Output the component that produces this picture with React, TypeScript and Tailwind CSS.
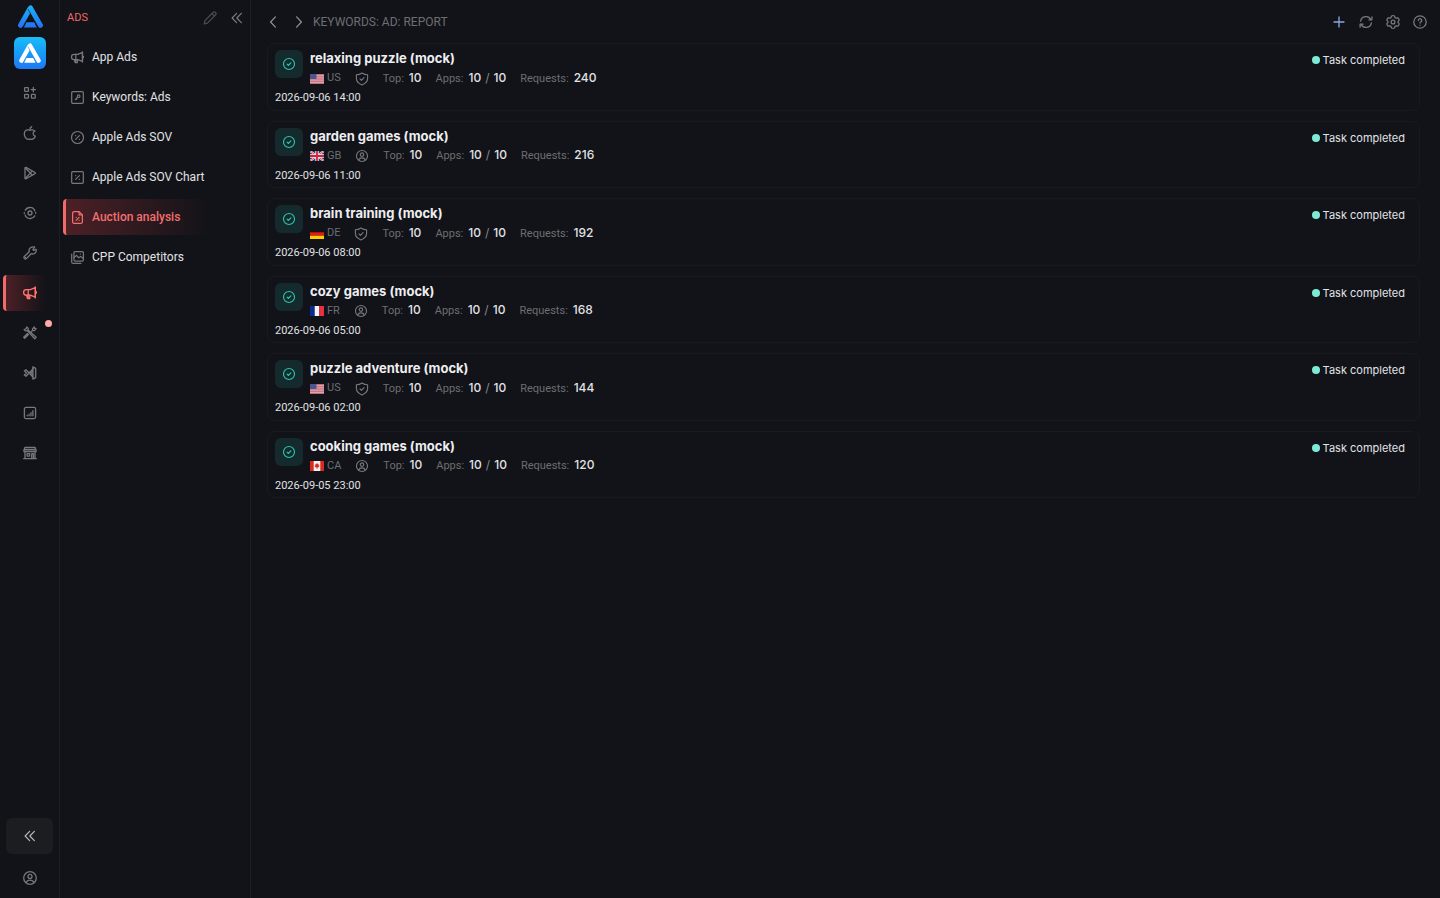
import type { ReactNode } from "react";

type IconProps = { className?: string; children?: ReactNode };

function Icon({ className = "size-4", children }: IconProps) {
  return (
    <svg
      viewBox="0 0 16 16"
      className={`shrink-0 ${className}`}
      fill="none"
      stroke="currentColor"
      strokeWidth="1.3"
      strokeLinecap="round"
      strokeLinejoin="round"
      aria-hidden="true"
    >
      {children}
    </svg>
  );
}

const icons = {
  apps: (
    <>
      <rect x="2.6" y="2.6" width="3.8" height="3.8" rx="0.6" />
      <rect x="2.6" y="9.4" width="3.8" height="3.8" rx="0.6" />
      <rect x="9.4" y="9.4" width="3.8" height="3.8" rx="0.6" />
      <path d="M11.3 2.4v4.4M9.1 4.6h4.4" />
    </>
  ),
  apple: (
    <>
      <path d="M13 6.200C12 5 10.600 4.600 9.400 4.900c-.9.300-1.900.300-2.800 0C4.200 4.300 2.300 6.200 2.300 8.700c0 2.900 1.900 5.700 4 5.700.6 0 1.100-.3 1.700-.3s1.100.3 1.700.3c1.700 0 3-1.700 3.600-3.400-1.400-.4-2.200-1.300-2.200-2.500s.7-2 1.900-2.300Z" />
      <path d="M8 4.600c0-1.500.6-2.500 1.700-3" />
    </>
  ),
  play: (
    <>
      <path d="M3 3v10.200c0 .5.500.8 1 .5l9-5.100c.5-.3.500-.8 0-1.100L4 2.400c-.5-.2-1 .1-1 .6Z" />
      <path d="m3.400 3 6.600 6.800M3.400 13.200 10 6.400" />
    </>
  ),
  target: (
    <>
      <circle cx="8" cy="8" r="2" />
      <path d="M3.200 5.200a5.600 5.600 0 0 1 9.200-.6l.3 1.300M12.800 10.800a5.600 5.600 0 0 1-9.200.6l-.3-1.300M2.300 7.700v.8M13.700 7.500v.8" />
    </>
  ),
  wrench: (
    <>
      <path d="M14 4.400c.6 1.900-.4 3.600-1.900 4.300-1 .4-2.100.3-2.900 0l-4.800 4.900a1.500 1.500 0 0 1-2.100-2.100l4.900-4.800c-.5-1.500 0-3 1.300-4 1.200-.9 2.800-1.100 4-.5" />
      <path d="M14 4.400 11.700 5.400 10.900 4.500l1.600-2.300M3.400 12.500h.1" />
    </>
  ),
  megaphone: (
    <>
      <path d="M8.300 4.600H4.400a2.800 2.800 0 0 0 0 5.600h3.900l5 2V2.600l-5 2Z" />
      <path d="M6.200 4.600v8.900h1.600v-3.300M4.600 10.300l.9 3.200h.7M13.300 1.900v11M14.300 6.700v1.500" />
    </>
  ),
  tools: (
    <>
      <path d="m9.400 6.600 1.200-1.200-.1-1.600L12.400 2l.3 1.400 1.400.3-1.800 1.900-1.700-.1M6.500 9.500l-3.800 3.800-1-1 3.800-3.800" />
      <path d="M2.100 4.500a2.400 2.400 0 0 0 3.200 1.100l7.400 8.200 1.500-1.500L6 5a2.400 2.400 0 0 0-1.200-3L4 3.900 2.100 4.500Z" />
    </>
  ),
  code: (
    <>
      <path d="M10.900 1.900v12.200l2.800-1.500V3.400l-2.800-1.500Z" />
      <path d="M10.900 4 4 11.200 2.300 9.900 4.600 8 2.300 6.100 4 4.800l6.900 7.200M10.900 6.200 8.900 8l2 1.800" />
    </>
  ),
  chart: (
    <>
      <rect x="2.4" y="2.4" width="11.2" height="11.2" rx="1.5" />
      <path d="M5.200 10.800v-.6M7.100 10.800V9.200M9 10.800V7.600M10.900 10.800V5.600" />
    </>
  ),
  store: (
    <>
      <path d="M3 2.300h10l1.100 3v1.200H1.900V5.300L3 2.300ZM3 6.800v6.700M13 6.800v6.700M1.700 13.700h12.600M3 4.500h10" />
      <path d="M5.100 8.700h2.500v2.400H5.100zM9.700 13.400V8.700h1.700v4.700" />
    </>
  ),
  user: (
    <>
      <circle cx="8" cy="8" r="6.3" />
      <circle cx="8" cy="6.400" r="2" />
      <path d="M4.200 12.500c.6-1.500 2-2.300 3.800-2.300s3.200.8 3.800 2.300" />
    </>
  ),
  keyBox: (
    <>
      <rect x="1.800" y="1.800" width="12.400" height="12.400" rx="1.200" />
      <circle cx="9.200" cy="6.600" r="1.400" />
      <path d="m8.100 7.700-2.500 2.600M6.600 9.300l.7.700" />
    </>
  ),
  percentCircle: (
    <>
      <circle cx="8" cy="8" r="6.400" />
      <path d="m6 10 4-4M6 6.100h.1M10 10h.1" />
    </>
  ),
  percentBox: (
    <>
      <rect x="1.800" y="1.800" width="12.400" height="12.400" rx="1.200" />
      <path d="m6 10 4-4M6 6.100h.1M10 10h.1" />
    </>
  ),
  percentFile: (
    <>
      <path d="M9.700 1.800H4.200a1.400 1.400 0 0 0-1.400 1.400v9.600a1.400 1.400 0 0 0 1.400 1.400h7.600a1.400 1.400 0 0 0 1.400-1.400V5.300L9.700 1.800Z" />
      <path d="M9.700 2v3.300H13M6.500 11l3.200-3.200M6.500 8h.1M9.700 11h.1" />
    </>
  ),
  images: (
    <>
      <rect x="4.200" y="1.700" width="10.100" height="10.100" rx="1.200" />
      <path d="M1.800 4.500v8.200c0 .9.700 1.600 1.600 1.600h8.200M4.500 8l2.400-2.300 2.500 2.600 2-1.500 2.700 2.200M11 4.300h.1" />
    </>
  ),
  pencil: <path d="m2.200 13.800.7-3.200 8.300-8.300a1.400 1.400 0 0 1 2 0l.5.5a1.400 1.400 0 0 1 0 2L5.400 13.100l-3.200.7ZM10 3.600 12.500 6" />,
  chevronsLeft: <path d="M7.600 2.600 2.400 8l5.200 5.400M13 2.600 7.800 8l5.200 5.400" />,
  chevronLeft: <path d="M10.400 2.900 5.600 8l4.800 5.100" />,
  chevronRight: <path d="M5.600 2.900 10.400 8l-4.800 5.100" />,
  plus: <path d="M8 3v10M3 8h10" />,
  refresh: (
    <>
      <path d="M2.600 7.200A5.500 5.500 0 0 1 12.900 5.600M13.400 8.800A5.500 5.500 0 0 1 3.100 10.400" />
      <path d="M13.900 2.800v3h-3M2.100 13.200v-3h3" />
    </>
  ),
  gear: (
    <>
      <path d="m6.500 2 1.500-.5L9.500 2l.5 1.600 1.100.6 1.600-.4 1.100 1.100.3 1.500L13 7.600v.8l1.100 1.200-.3 1.500-1.100 1.100-1.600-.4-1.100.6L9.500 14l-1.500.5L6.500 14 6 12.400l-1.100-.6-1.600.4-1.100-1.100-.3-1.500L3 8.400v-.8L1.900 6.400l.3-1.500 1.100-1.100 1.600.4L6 3.600 6.500 2Z" />
      <circle cx="8" cy="8" r="1.900" />
    </>
  ),
  help: (
    <>
      <circle cx="8" cy="8" r="6.200" />
      <path d="M6.300 6.400a1.700 1.700 0 1 1 2.600 1.500c-.6.300-.9.600-.9 1.100M8 11.200v.1" />
    </>
  ),
  check: (
    <>
      <circle cx="8" cy="8" r="6.300" />
      <path d="m5.800 8.200 1.600 1.500 2.700-3.100" />
    </>
  ),
  shield: (
    <>
      <path d="M8 1.100c1.900 1.300 4.100 2 6.400 2.100v4.300c0 3.500-2.600 5.800-6.400 7.400-3.800-1.600-6.400-3.900-6.400-7.400V3.200C3.900 3.100 6.100 2.400 8 1.100Z" />
      <path d="m5.700 7.900 1.700 1.600 2.900-3.200" />
    </>
  ),
};

type IconName = keyof typeof icons;

const railItems: { label: string; icon: IconName; active?: boolean; dot?: boolean }[] = [
  { label: "My apps", icon: "apps" },
  { label: "App Store", icon: "apple" },
  { label: "Google Play", icon: "play" },
  { label: "Visibility", icon: "target" },
  { label: "Keywords", icon: "wrench" },
  { label: "Ads", icon: "megaphone", active: true },
  { label: "Tools", icon: "tools", dot: true },
  { label: "Developer", icon: "code" },
  { label: "Analytics", icon: "chart" },
  { label: "Store", icon: "store" },
];

const menuItems: { label: string; icon: IconName; active?: boolean }[] = [
  { label: "App Ads", icon: "megaphone" },
  { label: "Keywords: Ads", icon: "keyBox" },
  { label: "Apple Ads SOV", icon: "percentCircle" },
  { label: "Apple Ads SOV Chart", icon: "percentBox" },
  { label: "Auction analysis", icon: "percentFile", active: true },
  { label: "CPP Competitors", icon: "images" },
];

const tasks: { title: string; country: string; icon: IconName; requests: number; date: string }[] = [
  { title: "relaxing puzzle (mock)", country: "US", icon: "shield", requests: 240, date: "2026-09-06 14:00" },
  { title: "garden games (mock)", country: "GB", icon: "user", requests: 216, date: "2026-09-06 11:00" },
  { title: "brain training (mock)", country: "DE", icon: "shield", requests: 192, date: "2026-09-06 08:00" },
  { title: "cozy games (mock)", country: "FR", icon: "user", requests: 168, date: "2026-09-06 05:00" },
  { title: "puzzle adventure (mock)", country: "US", icon: "shield", requests: 144, date: "2026-09-06 02:00" },
  { title: "cooking games (mock)", country: "CA", icon: "user", requests: 120, date: "2026-09-05 23:00" },
];

// two legs and a foot, with thin seams where the parts meet
function LogoShape({ fill, seam }: { fill: string; seam: string }) {
  return (
    <>
      <path d="M2.600 20.300 11.300 4.600" stroke={fill} strokeWidth="5" strokeLinecap="round" />
      <path d="M12.500 2.900 22.400 20.300" stroke={seam} strokeWidth="6.200" />
      <path d="M12.500 2.900 22.400 20.300" stroke={fill} strokeWidth="5" strokeLinecap="round" />
      <path d="M8.200 17.200h8.200l2.600 5.400H5.600l2.600-5.400Z" fill={fill} />
      <path d="M8.300 16.500 5.200 22.800M16.400 16.500l3.200 6.300" stroke={seam} strokeWidth="0.900" />
    </>
  );
}

function Logo() {
  return (
    <svg viewBox="0 0 25 23" className="h-[23px] w-[25px]" fill="none" aria-hidden="true">
      <defs>
        <linearGradient id="logo" gradientUnits="userSpaceOnUse" x1="0" y1="0" x2="0" y2="23">
          <stop stopColor="#18b4f5" />
          <stop offset="1" stopColor="#2670f2" />
        </linearGradient>
      </defs>
      <LogoShape fill="url(#logo)" seam="#111318" />
    </svg>
  );
}

function Flag({ country }: { country: string }) {
  return (
    <svg viewBox="0 0 14 10" className="h-[10px] w-[14px]" role="img" aria-label={country}>
      {country === "US" && (
        <>
          <path fill="#d9b5ba" d="M0 0h14v10H0z" />
          <path stroke="#c4626e" strokeWidth="0.9" d="M0 .5h14M0 2.300h14M0 4.100h14M0 5.900h14M0 7.700h14M0 9.500h14" />
          <path fill="#4c5590" d="M0 0h6.500v5H0z" />
        </>
      )}
      {country === "GB" && (
        <>
          <path fill="#1c3578" d="M0 0h14v10H0z" />
          <path stroke="#eee" strokeWidth="2" d="m0 0 14 10M14 0 0 10" />
          <path stroke="#d22c3c" strokeWidth="0.8" d="m0 0 14 10M14 0 0 10" />
          <path stroke="#eee" strokeWidth="3.400" d="M7 0v10M0 5h14" />
          <path stroke="#d8203a" strokeWidth="1.800" d="M7 0v10M0 5h14" />
        </>
      )}
      {country === "DE" && (
        <>
          <path fill="#16120f" d="M0 0h14v3.300H0z" />
          <path fill="#e31b1b" d="M0 3.300h14v3.400H0z" />
          <path fill="#ffce00" d="M0 6.700h14V10H0z" />
        </>
      )}
      {country === "FR" && (
        <>
          <path fill="#0a2a94" d="M0 0h4.700v10H0z" />
          <path fill="#f4f4f6" d="M4.700 0h4.600v10H4.700z" />
          <path fill="#e8303e" d="M9.300 0H14v10H9.300z" />
        </>
      )}
      {country === "CA" && (
        <>
          <path fill="#f4eeee" d="M0 0h14v10H0z" />
          <path fill="#d92a20" d="M0 0h3.700v10H0zM10.300 0H14v10h-3.700z" />
          <path fill="#d92a20" d="m7 1.700.8 1.500.9-.3-.2 1.600 1.200.2-1.500 1.900H7.300v1.500h-.6V6.600H5.800L4.300 4.700l1.200-.2-.2-1.600.9.300L7 1.700Z" />
        </>
      )}
    </svg>
  );
}

function Rail() {
  return (
    <nav aria-label="Sections" className="flex w-[60px] shrink-0 flex-col border-r border-[#1c1e23] text-[#77787c]">
      <div className="flex flex-col items-center pt-[5px] pl-px">
        <Logo />
        <button aria-label="Current app" className="mt-[9px] flex size-8 items-center justify-center rounded-md bg-linear-to-b from-[#1cbcf8] to-[#1f78f4]">
          <svg viewBox="0 0 25 23" className="h-5 w-[22px]" fill="none" aria-hidden="true">
            <LogoShape fill="#fff" seam="#2494f6" />
          </svg>
        </button>
      </div>
      <div className="mt-[6px] flex flex-col gap-1 px-[3px]">
        {railItems.map((item) => (
          <button
            key={item.label}
            aria-label={item.label}
            className={`relative flex h-9 items-center justify-center rounded-sm border-l-3 pr-[3px] ${
              item.active
                ? "border-[#f26b6b] bg-linear-to-r from-[#4c2026] to-transparent to-80% text-[#ff7470]"
                : "border-transparent"
            }`}
          >
            <Icon>{icons[item.icon]}</Icon>
            {item.dot && <span className="absolute top-[5px] right-1 size-[7px] rounded-full bg-[#ffaba5]" />}
          </button>
        ))}
      </div>
      <div className="mt-auto flex flex-col items-center gap-4 pb-3">
        <button aria-label="Collapse" className="flex h-9 w-[47px] items-center justify-center rounded-md bg-[#1c1d21] text-[#b9babd]">
          <Icon className="size-[14px]">{icons.chevronsLeft}</Icon>
        </button>
        <button aria-label="Account">
          <Icon>{icons.user}</Icon>
        </button>
      </div>
    </nav>
  );
}

function Sidebar() {
  return (
    <aside className="w-[191px] shrink-0 border-r border-[#1c1e23]">
      <div className="flex h-9 items-center pr-[6px] pl-[7px]">
        <h2 className="text-[11px] text-[#ee6868]">ADS</h2>
        <button aria-label="Edit" className="mr-3 ml-auto text-[#4a4b4f]">
          <Icon>{icons.pencil}</Icon>
        </button>
        <button aria-label="Collapse menu" className="text-[#7c7d81]">
          <Icon className="size-[14px]">{icons.chevronsLeft}</Icon>
        </button>
      </div>
      <nav aria-label="Ads" className="mt-[3px] flex flex-col gap-1 px-[3px]">
        {menuItems.map((item) => (
          <a
            key={item.label}
            href="#"
            className={`flex h-9 items-center gap-[7px] rounded-sm border-l-3 pl-1 text-xs ${
              item.active
                ? "border-[#f26b6b] bg-linear-to-r from-[#4c2026] to-transparent to-80% font-medium text-[#f26f6f]"
                : "border-transparent text-[#e2e2e5]"
            }`}
          >
            <Icon className={item.active ? "size-[15px]" : "size-[15px] text-[#77787c]"}>{icons[item.icon]}</Icon>
            {item.label}
          </a>
        ))}
      </nav>
    </aside>
  );
}

function Stat({ label, children }: { label: string; children: ReactNode }) {
  return (
    <span className="flex items-baseline gap-[5px] text-[#6d6e72]">
      {label}
      <span className="flex gap-1 font-['Inter',sans-serif] text-xs font-medium text-[#e2e2e5]">{children}</span>
    </span>
  );
}

function TaskCard({ task }: { task: (typeof tasks)[number] }) {
  return (
    <article className="rounded-lg border border-[#181a1f] px-[7px] pt-[6px] pb-[3px]">
      <div className="flex items-start gap-[7px]">
        <div className="flex size-7 items-center justify-center rounded-md bg-[#142a2d] text-[#2bc4ae]">
          <Icon className="size-[14px]">{icons.check}</Icon>
        </div>
        <div>
          <h3 className="font-['Inter',sans-serif] text-[13px] leading-4 font-bold text-[#eeeef1]">{task.title}</h3>
          <div className="mt-1 flex h-[17px] items-center gap-[14px] text-[11px]">
            <span className="flex items-center gap-[3px] text-[#6d6e72]">
              <Flag country={task.country} />
              {task.country}
            </span>
            <Icon className="size-[14px] text-[#77787c]">{icons[task.icon]}</Icon>
            <Stat label="Top:">10</Stat>
            <Stat label="Apps:">
              <span>10</span>
              <span className="font-normal text-[#85868a]">/</span>
              <span>10</span>
            </Stat>
            <Stat label="Requests:">{task.requests}</Stat>
          </div>
        </div>
        <p className="mr-[7px] ml-auto flex items-center gap-[3px] font-['Inter',sans-serif] text-[11px] leading-5 text-[#e2e2e5]">
          <span className="size-2 rounded-full bg-[#7eead6]" />
          Task completed
        </p>
      </div>
      <time className="mt-[3px] block text-[11px] leading-normal text-[#e2e2e5]">{task.date}</time>
    </article>
  );
}

export default function App() {
  return (
    <div className="flex min-h-screen bg-[#111318] font-['Roboto',sans-serif] text-[#e2e2e5]">
      <Rail />
      <Sidebar />
      <main className="min-w-0 flex-1">
        <header className="flex h-[43px] items-center pr-3 pl-[14px] text-[#77787c]">
          <button aria-label="Back" className="text-[#8d8e92]">
            <Icon>{icons.chevronLeft}</Icon>
          </button>
          <button aria-label="Forward" className="ml-[10px] text-[#8d8e92]">
            <Icon>{icons.chevronRight}</Icon>
          </button>
          <h1 className="ml-[6px] text-xs text-[#6d6e72]">KEYWORDS: AD: REPORT</h1>
          <div className="ml-auto flex items-center gap-[11px]">
            <button aria-label="Add" className="text-[#8fa8e0]">
              <Icon>{icons.plus}</Icon>
            </button>
            <button aria-label="Refresh">
              <Icon>{icons.refresh}</Icon>
            </button>
            <button aria-label="Settings">
              <Icon>{icons.gear}</Icon>
            </button>
            <button aria-label="Help">
              <Icon>{icons.help}</Icon>
            </button>
          </div>
        </header>
        <section aria-label="Reports" className="flex flex-col gap-[10px] pr-5 pl-4">
          {tasks.map((task) => (
            <TaskCard key={task.date} task={task} />
          ))}
        </section>
      </main>
    </div>
  );
}
